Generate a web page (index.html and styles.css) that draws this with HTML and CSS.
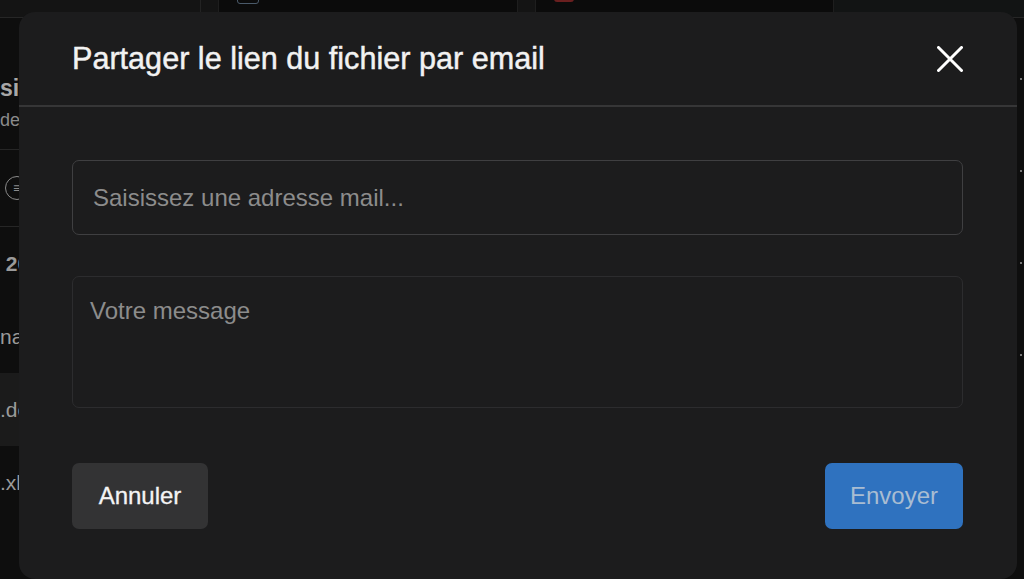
FILE: index.html
```html
<!DOCTYPE html>
<html>
<head>
    <title>Partager le lien du fichier par email</title>
    <link rel="stylesheet" href="styles.css">
</head>
<body>
    <div class="app">
        <div class="topbar">
            <div class="tb-cell tb-first"></div>
            <div class="tb-card"><span class="tb-icon blue"></span></div>
            <div class="tb-card"><span class="tb-icon red"></span></div>
            <div class="tb-cell tb-last"></div>
        </div>
        <div class="list">
            <div class="row row-head">
                <span class="big">sion</span>
                <span class="small">de l'équipe</span>
            </div>
            <div class="row row-icon"><span class="circle">≡</span></div>
            <div class="row row-text"><span class="bold">&nbsp;2024</span></div>
            <div class="row row-text"><span>nal</span></div>
            <div class="row row-text active"><span>.docx</span></div>
            <div class="row row-text"><span>.xlsx</span></div>
        </div>
        <div class="side-right">
            <span class="dot"></span>
            <span class="dot"></span>
            <span class="dot"></span>
            <span class="dot"></span>
        </div>
    </div>

    <div class="modal">
        <div class="modal-header">
            <h2>Partager le lien du fichier par email</h2>
            <button class="close" aria-label="Fermer">
                <svg width="26" height="26" viewBox="0 0 26 26">
                    <path d="M1.5 1.5 L24.5 24.5 M24.5 1.5 L1.5 24.5" stroke="#fff" stroke-width="3" stroke-linecap="round"/>
                </svg>
            </button>
        </div>
        <div class="modal-body">
            <input type="text" class="field" placeholder="Saisissez une adresse mail...">
            <textarea class="field message" placeholder="Votre message"></textarea>
            <div class="actions">
                <button class="btn btn-cancel">Annuler</button>
                <button class="btn btn-send">Envoyer</button>
            </div>
        </div>
    </div>
</body>
</html>
```

FILE: styles.css
```css
html, body { margin: 0; height: 100%; }
body { background: #0e0e0e; font-family: "Liberation Sans", Arial, sans-serif; overflow: hidden; }

.app { height: 579px; display: flex; flex-wrap: wrap; align-content: flex-start; }
.topbar { width: 100%; height: 17px; display: flex; background: #141414; border-bottom: 1px solid #262626; }
.tb-cell { height: 100%; }
.tb-first { width: 200px; border-right: 1px solid #232323; }
.tb-card { width: 298px; margin-left: 17px; background: #0b0b0b; border-left: 1px solid #1e1e1e; border-right: 1px solid #1e1e1e; position: relative; }
.tb-card:nth-child(3) { margin-left: 17px; width: 297px; }
.tb-last { flex: 1; background: #121414; }
.tb-icon { position: absolute; left: 18px; top: -6px; width: 20px; height: 8px; border-radius: 3px; }
.tb-icon.blue { border: 1px solid #4a5a6a; }
.tb-icon.red { background: #6a1f1f; }

.list { width: 1012px; }
.row { border-bottom: 1px solid #262626; color: #9a9a9a; white-space: nowrap; }
.row-head { height: 132px; display: flex; flex-direction: column; padding-top: 57px; box-sizing: border-box; }
.big { font-size: 23px; font-weight: bold; color: #a8a8a8; }
.small { font-size: 18px; color: #8a8a8a; margin-top: 8px; }
.row-icon { height: 76px; display: flex; align-items: center; padding-left: 5px; }
.circle { width: 22px; height: 22px; border: 1.5px solid #8a8a8a; border-radius: 50%; font-size: 14px; display: flex; align-items: center; justify-content: center; color: #8a8a8a; }
.row-text { height: 73px; display: flex; align-items: center; font-size: 21px; border-bottom: none; }
.bold { font-weight: bold; }
.active { background: #1b1b1b; }
.side-right { width: 12px; display: flex; flex-direction: column; align-items: flex-end; gap: 90px; padding-top: 60px; }
.dot { width: 2px; height: 2px; background: #777; margin-right: 2px; }

.modal { position: fixed; left: 19px; top: 12px; width: 998px; height: 567px; background: #1c1c1d; border-radius: 16px; display: flex; flex-direction: column; color: #f2f2f2; }
.modal-header { height: 93px; display: flex; align-items: center; justify-content: space-between; padding: 0 54px 0 53px; border-bottom: 2px solid #363637; }
.modal-header h2 { margin: 0; font-size: 30.6px; font-weight: normal; -webkit-text-stroke: 0.45px #f2f2f2; }
.close { background: none; border: none; padding: 0; width: 26px; height: 26px; display: flex; }

.modal-body { padding: 53px 54px 0 53px; display: flex; flex-direction: column; }
.field { box-sizing: border-box; width: 100%; background: transparent; border: 1.5px solid #3f3f41; border-radius: 7px; font-family: "Liberation Sans", Arial, sans-serif; font-size: 24px; color: #eee; outline: none; }
input.field { height: 75px; padding: 0 20px; }
.message { height: 132px; margin-top: 41px; padding: 20px 17px 17px; resize: none; border-color: #2c2c2e; }
.field::placeholder { color: #8c8c8c; }

.actions { display: flex; justify-content: space-between; margin-top: 55px; }
.btn { height: 66px; border: none; border-radius: 7px; font-family: "Liberation Sans", Arial, sans-serif; font-size: 24px; }
.btn-cancel { width: 136px; background: #333334; color: #f4f4f4; -webkit-text-stroke: 0.3px #f4f4f4; }
.btn-send { width: 138px; background: #2f72bf; color: #a9bdd2; }
```
